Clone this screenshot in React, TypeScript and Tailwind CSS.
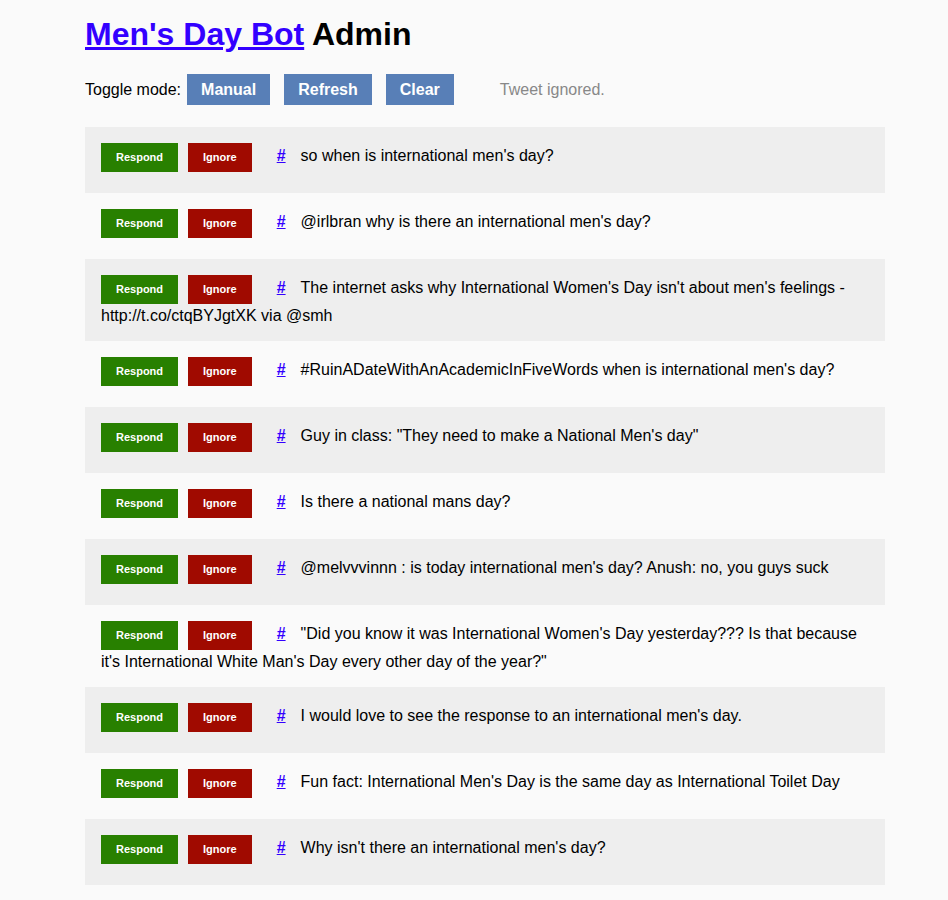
import React from "react";

const tweets = [
  "so when is international men's day?",
  "@irlbran why is there an international men's day?",
  "The internet asks why International Women's Day isn't about men's feelings - http://t.co/ctqBYJgtXK via @smh",
  "#RuinADateWithAnAcademicInFiveWords when is international men's day?",
  'Guy in class: "They need to make a National Men\'s day"',
  "Is there a national mans day?",
  "@melvvvinnn : is today international men's day? Anush: no, you guys suck",
  '"Did you know it was International Women\'s Day yesterday??? Is that because it\'s International White Man\'s Day every other day of the year?"',
  "I would love to see the response to an international men's day.",
  "Fun fact: International Men's Day is the same day as International Toilet Day",
  "Why isn't there an international men's day?",
];

function TopButton({ label }: { label: string }) {
  return (
    <button className="flex h-[31px] items-center bg-[#587fb7] px-[14px] text-[16px] font-bold text-white">
      {label}
    </button>
  );
}

function TweetRow({ text, odd }: { text: string; odd: boolean }) {
  return (
    <div className={`min-h-[66px] px-4 pt-4 pb-[14px] ${odd ? "bg-[#eeeeee]" : "bg-[#fafafa]"}`}>
      <div className="text-[16px] leading-[23px] text-black">
        <span className="inline-block h-[29px] bg-[#288000] px-[15px] align-baseline text-[11px] font-bold leading-[29px] text-white">
          Respond
        </span>
        <span className="ml-[10px] inline-block h-[29px] bg-[#a00a00] px-[15px] align-baseline text-[11px] font-bold leading-[29px] text-white">
          Ignore
        </span>
        <a href="#" className="ml-[25px] mr-[15px] font-extrabold text-[#3300ff] underline">
          #
        </a>
        {text}
      </div>
    </div>
  );
}

export default function App() {
  return (
    <div
      className="min-h-screen bg-[#fafafa] pt-[16px] pb-[15px]"
      style={{ fontFamily: '"Liberation Sans", Arial, Helvetica, sans-serif' }}
    >
      <div className="ml-[85px] w-[800px]">
        <h1 className="text-[32px] font-bold leading-[37px] text-black">
          <a href="#" className="text-[#3300ff] underline">
            Men's Day Bot
          </a>{" "}
          Admin
        </h1>

        <div className="mt-[21px] flex h-[31px] items-center text-[16px] text-black">
          <span className="mr-[6px]">Toggle mode:</span>
          <div className="flex gap-[14px]">
            <TopButton label="Manual" />
            <TopButton label="Refresh" />
            <TopButton label="Clear" />
          </div>
          <span className="ml-[46px] text-[#888888]">Tweet ignored.</span>
        </div>

        <div className="mt-[22px]">
          {tweets.map((t, i) => (
            <TweetRow key={i} text={t} odd={i % 2 === 0} />
          ))}
        </div>
      </div>
    </div>
  );
}
